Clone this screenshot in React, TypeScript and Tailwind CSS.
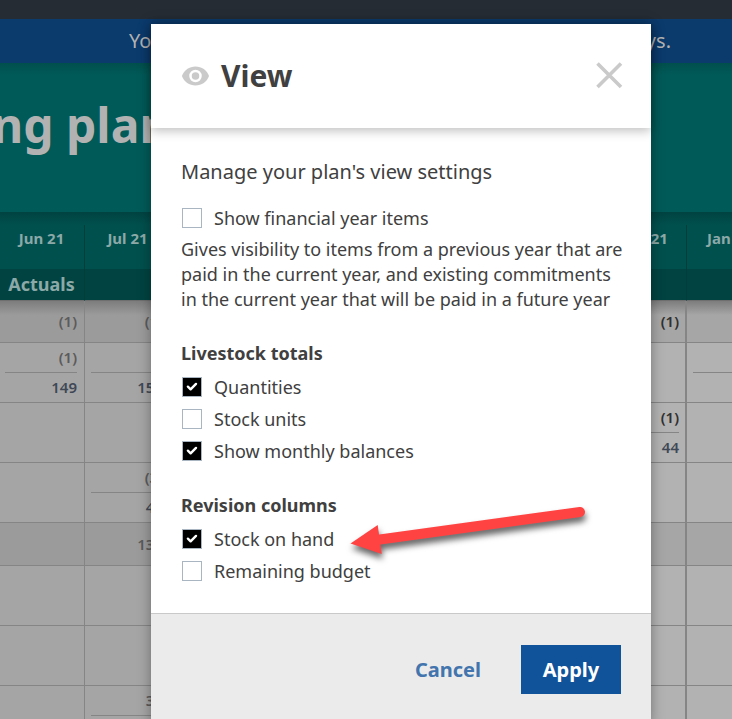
import { useState } from "react"
import clsx from "clsx"

type Cell = { top?: string; bottom?: string; split?: boolean }
type Row = { total?: boolean; cells: Record<string, Cell> }

// the unnamed column is the spacer between actuals and budget
const months = ["Jun 21", "Jul 21", "Aug 21", "Sep 21", "Oct 21", "Nov 21", "", "Dec 21", "Jan 22"]

// columns before this index are shaded
const FIRST_BUDGET = 7

const rows: Row[] = [
  {
    total: true,
    cells: { "Jun 21": { top: "(1)" }, "Jul 21": { top: "(1)" }, "Dec 21": { top: "(1)" } },
  },
  {
    cells: {
      "Jun 21": { top: "(1)", bottom: "149", split: true },
      "Jul 21": { bottom: "150", split: true },
      "Jan 22": { split: true },
    },
  },
  { cells: { "Dec 21": { top: "(1)", bottom: "44", split: true } } },
  { cells: { "Jul 21": { top: "(3)", bottom: "44", split: true } } },
  { total: true, cells: { "Jul 21": { top: "134" } } },
  { cells: {} },
  { cells: {} },
  { cells: { "Jul 21": { top: "30", split: true } } },
]

const PlanCell = ({ cell, budget }: { cell?: Cell; budget: boolean }) => {
  if (!cell) return null
  const topColor = budget ? "text-[#303030]" : "text-[#5b5b5b]"
  if (!cell.split) return <div className={topColor}>{cell.top}</div>
  return (
    <div className="leading-7">
      <div className={clsx("h-[29px]", topColor)}>{cell.top}</div>
      <div className="h-[30px] border-t border-[#858585] text-[#3f4856]">{cell.bottom}</div>
    </div>
  )
}

const PlanTable = () => (
  <div className="bg-[#00504e] bg-linear-to-b from-[#004341] to-[#00504e] to-[13px] pt-[13px]">
    <table className="-ml-px w-[774px] min-w-full table-fixed border-separate border-spacing-0 text-[15px] font-semibold">
      <thead className="text-[#8ca9a8]">
        <tr>
          {months.map((m) => (
            <th
              key={m}
              className="h-[44px] border-r border-[#003e3c] pt-[3px] align-top text-[15px] leading-5 font-bold whitespace-nowrap"
            >
              {m}
            </th>
          ))}
        </tr>
        <tr className="bg-[#004341]">
          {months.map((m, i) => (
            <th
              key={m}
              className="h-[32px] border-r border-b border-r-[#003e3c] border-b-[#6f6f6f] p-0 align-top text-lg leading-[30px] font-bold"
            >
              {i === 0 && "Actuals"}
            </th>
          ))}
        </tr>
      </thead>
      <tbody>
        {rows.map((row, r) => (
          <tr key={r}>
            {months.map((m, i) => {
              const budget = i >= FIRST_BUDGET
              return (
                <td
                  key={m}
                  className={clsx(
                    "border-b border-[#858585] py-0 pl-[6px] text-right align-top",
                    i === FIRST_BUDGET ? "border-r-2 pr-[6px]" : "border-r pr-[7px]",
                    !row.total && "h-[60px]",
                    row.total && (r === 0 ? "h-[42px] leading-10" : "h-[43px] leading-[42px]"),
                    r === 0 && "bg-linear-to-b from-[#7d7d7d] to-[14px]",
                    r === 0 && (budget ? "to-[#a6a6a6]" : "to-[#9b9b9b]"),
                    r > 0 && row.total && (budget ? "bg-[#a6a6a6]" : "bg-[#9b9b9b]"),
                    !row.total && (budget ? "bg-[#b2b2b2]" : "bg-[#a5a5a5]")
                  )}
                >
                  <PlanCell cell={row.cells[m]} budget={budget} />
                </td>
              )
            })}
          </tr>
        ))}
      </tbody>
    </table>
  </div>
)

const Check = ({
  label,
  defaultChecked = false,
}: {
  label: string
  defaultChecked?: boolean
}) => {
  const [checked, setChecked] = useState(defaultChecked)
  return (
    <label className="flex h-6 items-center gap-3 pl-px">
      <span className="grid size-5 place-items-center">
        <input
          type="checkbox"
          checked={checked}
          onChange={(e) => setChecked(e.target.checked)}
          className="col-start-1 row-start-1 size-5 appearance-none border border-[#a9b5c0] bg-white checked:bg-black"
        />
        {checked && (
          <svg
            viewBox="0 0 20 20"
            className="pointer-events-none z-10 col-start-1 row-start-1 size-5"
            fill="none"
            stroke="#fff"
            strokeWidth="2.4"
            strokeLinecap="round"
            strokeLinejoin="round"
          >
            <path d="M5.9 9.7 8.6 12.3 14 6.9" />
          </svg>
        )}
      </span>
      {label}
    </label>
  )
}

const Arrow = () => (
  <svg
    viewBox="0 0 250 60"
    className="pointer-events-none absolute top-[494px] left-[194px] h-[60px] w-[250px] overflow-visible"
    style={{ filter: "drop-shadow(1px 5px 3px rgba(0,0,0,.6))" }}
  >
    <path d="M35 21.5 235 -6" stroke="#ff4343" strokeWidth="10" strokeLinecap="round" />
    <path d="M5.5 25.5 32.7 7 36.7 36Z" fill="#ff4343" />
  </svg>
)

const ViewDialog = () => (
  <div
    role="dialog"
    aria-labelledby="view-title"
    className="relative w-[500px] bg-white text-lg text-[#404040] shadow-[0_0_12px_rgba(0,0,0,.35)]"
  >
    <header className="relative flex h-[104px] items-center bg-white pr-7 pl-[30px] shadow-[0_3px_10px_rgba(0,0,0,.25)]">
      <svg viewBox="0 0 28 20" className="mr-3 h-5 w-7" fill="none">
        <path
          d="M14.5 .5C8.3 .5 3 4.3 .9 10 3 15.7 8.3 19.5 14.5 19.5S26 15.7 28 10C26 4.3 20.7 .5 14.5 .5Z"
          fill="#cacaca"
        />
        <circle cx="14.5" cy="10" r="5" stroke="#fff" strokeWidth="2.5" fill="#cacaca" />
      </svg>
      <h1 id="view-title" className="text-[30px] leading-10 font-bold">
        View
      </h1>
      <button type="button" aria-label="Close" className="ml-auto">
        <svg viewBox="0 0 28 28" className="size-7" stroke="#cacaca" strokeWidth="3.6">
          <path d="M2.5 1.5 26 25M26 1.5 2.5 25" />
        </svg>
      </button>
    </header>
    <div className="px-[30px] py-[30px] leading-6">
      <p className="text-xl leading-7">Manage your plan's view settings</p>
      <div className="mt-5">
        <Check label="Show financial year items" />
      </div>
      <p className="-mr-2 mt-[7px] leading-[25px]">
        Gives visibility to items from a previous year that are paid in the current year,
        and existing commitments in the current year that will be paid in a future year
      </p>
      <fieldset className="mt-[29px] flex flex-col gap-2">
        <legend className="mb-[10px] font-bold">Livestock totals</legend>
        <Check label="Quantities" defaultChecked />
        <Check label="Stock units" />
        <Check label="Show monthly balances" defaultChecked />
      </fieldset>
      <fieldset className="mt-[30px] flex flex-col gap-2">
        <legend className="mb-[10px] font-bold">Revision columns</legend>
        <Check label="Stock on hand" defaultChecked />
        <Check label="Remaining budget" />
      </fieldset>
    </div>
    <footer className="flex items-center justify-end gap-10 border-t border-[#c9c9c9] bg-[#ebebeb] px-[30px] py-[31px] text-xl font-bold">
      <button type="button" className="text-[#4274ad]">
        Cancel
      </button>
      <button type="button" className="h-[49px] w-[100px] bg-[#10539b] text-white">
        Apply
      </button>
    </footer>
    <Arrow />
  </div>
)

export default function App() {
  return (
    <div className="relative h-screen overflow-hidden bg-[#a5a5a5] font-['Noto_Sans',sans-serif]">
      <div className="h-[19px] bg-[#252c33]" />
      <div className="flex h-11 items-center justify-center bg-[#0b3a6c] pl-[68px] text-xl text-[#b2b2b2]">
        <p className="flex w-[542px] justify-between">
          <span>You</span>
          <span>days.</span>
        </p>
      </div>
      <div className="h-[149px] bg-linear-to-b from-[#004f4d] to-[#005a58] to-[12px] pt-[26px]">
        <h2 className="-ml-2 text-5xl leading-[72px] font-bold whitespace-nowrap text-[#b2b2b2]">
          ng plan
        </h2>
      </div>
      <PlanTable />
      <div className="absolute inset-0 flex items-start justify-center pt-6 pl-[70px]">
        <ViewDialog />
      </div>
    </div>
  )
}
